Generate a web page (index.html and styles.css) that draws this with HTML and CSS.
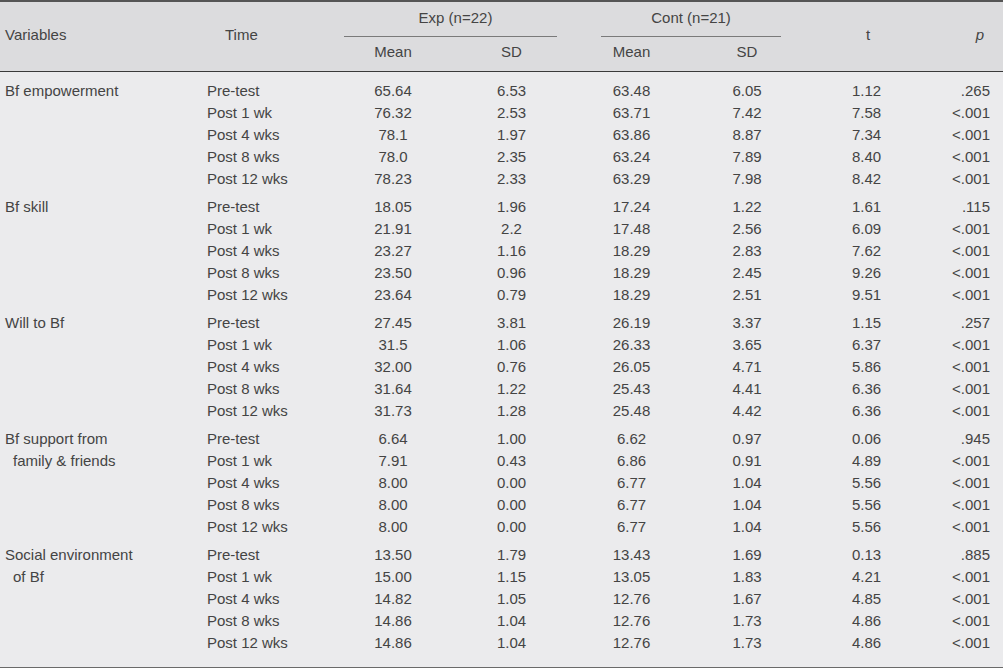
FILE: index.html
```html
<!DOCTYPE html>
<html>
<head>
<meta charset="utf-8">
<link rel="stylesheet" href="styles.css">
</head>
<body>
<table class="tbl">
  <colgroup>
    <col class="c-var"><col class="c-time"><col class="c-em"><col class="c-es"><col class="c-gap"><col class="c-cm"><col class="c-cs"><col class="c-t"><col class="c-p">
  </colgroup>
  <thead>
    <tr class="h1">
      <th rowspan="2" class="h-var">Variables</th>
      <th rowspan="2" class="h-time">Time</th>
      <th colspan="2" class="h-grp h-exp">Exp (n=22)</th>
      <th rowspan="2" class="h-gap"></th>
      <th colspan="2" class="h-grp">Cont (n=21)</th>
      <th rowspan="2" class="h-t">t</th>
      <th rowspan="2" class="h-p"><i>p</i></th>
    </tr>
    <tr class="h2">
      <th class="em">Mean</th>
      <th class="es">SD</th>
      <th class="cm">Mean</th>
      <th class="cs">SD</th>
    </tr>
  </thead>
  <tbody>
    <tr class="grp first"><td class="var">Bf empowerment</td><td class="time">Pre-test</td><td class="em">65.64</td><td class="es">6.53</td><td></td><td class="cm">63.48</td><td class="cs">6.05</td><td class="t">1.12</td><td class="p">.265</td></tr>
    <tr><td class="var"></td><td class="time">Post 1 wk</td><td class="em">76.32</td><td class="es">2.53</td><td></td><td class="cm">63.71</td><td class="cs">7.42</td><td class="t">7.58</td><td class="p">&lt;.001</td></tr>
    <tr><td class="var"></td><td class="time">Post 4 wks</td><td class="em">78.1</td><td class="es">1.97</td><td></td><td class="cm">63.86</td><td class="cs">8.87</td><td class="t">7.34</td><td class="p">&lt;.001</td></tr>
    <tr><td class="var"></td><td class="time">Post 8 wks</td><td class="em">78.0</td><td class="es">2.35</td><td></td><td class="cm">63.24</td><td class="cs">7.89</td><td class="t">8.40</td><td class="p">&lt;.001</td></tr>
    <tr><td class="var"></td><td class="time">Post 12 wks</td><td class="em">78.23</td><td class="es">2.33</td><td></td><td class="cm">63.29</td><td class="cs">7.98</td><td class="t">8.42</td><td class="p">&lt;.001</td></tr>

    <tr class="grp"><td class="var">Bf skill</td><td class="time">Pre-test</td><td class="em">18.05</td><td class="es">1.96</td><td></td><td class="cm">17.24</td><td class="cs">1.22</td><td class="t">1.61</td><td class="p">.115</td></tr>
    <tr><td class="var"></td><td class="time">Post 1 wk</td><td class="em">21.91</td><td class="es">2.2</td><td></td><td class="cm">17.48</td><td class="cs">2.56</td><td class="t">6.09</td><td class="p">&lt;.001</td></tr>
    <tr><td class="var"></td><td class="time">Post 4 wks</td><td class="em">23.27</td><td class="es">1.16</td><td></td><td class="cm">18.29</td><td class="cs">2.83</td><td class="t">7.62</td><td class="p">&lt;.001</td></tr>
    <tr><td class="var"></td><td class="time">Post 8 wks</td><td class="em">23.50</td><td class="es">0.96</td><td></td><td class="cm">18.29</td><td class="cs">2.45</td><td class="t">9.26</td><td class="p">&lt;.001</td></tr>
    <tr><td class="var"></td><td class="time">Post 12 wks</td><td class="em">23.64</td><td class="es">0.79</td><td></td><td class="cm">18.29</td><td class="cs">2.51</td><td class="t">9.51</td><td class="p">&lt;.001</td></tr>

    <tr class="grp"><td class="var">Will to Bf</td><td class="time">Pre-test</td><td class="em">27.45</td><td class="es">3.81</td><td></td><td class="cm">26.19</td><td class="cs">3.37</td><td class="t">1.15</td><td class="p">.257</td></tr>
    <tr><td class="var"></td><td class="time">Post 1 wk</td><td class="em">31.5</td><td class="es">1.06</td><td></td><td class="cm">26.33</td><td class="cs">3.65</td><td class="t">6.37</td><td class="p">&lt;.001</td></tr>
    <tr><td class="var"></td><td class="time">Post 4 wks</td><td class="em">32.00</td><td class="es">0.76</td><td></td><td class="cm">26.05</td><td class="cs">4.71</td><td class="t">5.86</td><td class="p">&lt;.001</td></tr>
    <tr><td class="var"></td><td class="time">Post 8 wks</td><td class="em">31.64</td><td class="es">1.22</td><td></td><td class="cm">25.43</td><td class="cs">4.41</td><td class="t">6.36</td><td class="p">&lt;.001</td></tr>
    <tr><td class="var"></td><td class="time">Post 12 wks</td><td class="em">31.73</td><td class="es">1.28</td><td></td><td class="cm">25.48</td><td class="cs">4.42</td><td class="t">6.36</td><td class="p">&lt;.001</td></tr>

    <tr class="grp"><td class="var">Bf support from</td><td class="time">Pre-test</td><td class="em">6.64</td><td class="es">1.00</td><td></td><td class="cm">6.62</td><td class="cs">0.97</td><td class="t">0.06</td><td class="p">.945</td></tr>
    <tr><td class="var cont">family &amp; friends</td><td class="time">Post 1 wk</td><td class="em">7.91</td><td class="es">0.43</td><td></td><td class="cm">6.86</td><td class="cs">0.91</td><td class="t">4.89</td><td class="p">&lt;.001</td></tr>
    <tr><td class="var"></td><td class="time">Post 4 wks</td><td class="em">8.00</td><td class="es">0.00</td><td></td><td class="cm">6.77</td><td class="cs">1.04</td><td class="t">5.56</td><td class="p">&lt;.001</td></tr>
    <tr><td class="var"></td><td class="time">Post 8 wks</td><td class="em">8.00</td><td class="es">0.00</td><td></td><td class="cm">6.77</td><td class="cs">1.04</td><td class="t">5.56</td><td class="p">&lt;.001</td></tr>
    <tr><td class="var"></td><td class="time">Post 12 wks</td><td class="em">8.00</td><td class="es">0.00</td><td></td><td class="cm">6.77</td><td class="cs">1.04</td><td class="t">5.56</td><td class="p">&lt;.001</td></tr>

    <tr class="grp"><td class="var">Social environment</td><td class="time">Pre-test</td><td class="em">13.50</td><td class="es">1.79</td><td></td><td class="cm">13.43</td><td class="cs">1.69</td><td class="t">0.13</td><td class="p">.885</td></tr>
    <tr><td class="var cont">of Bf</td><td class="time">Post 1 wk</td><td class="em">15.00</td><td class="es">1.15</td><td></td><td class="cm">13.05</td><td class="cs">1.83</td><td class="t">4.21</td><td class="p">&lt;.001</td></tr>
    <tr><td class="var"></td><td class="time">Post 4 wks</td><td class="em">14.82</td><td class="es">1.05</td><td></td><td class="cm">12.76</td><td class="cs">1.67</td><td class="t">4.85</td><td class="p">&lt;.001</td></tr>
    <tr><td class="var"></td><td class="time">Post 8 wks</td><td class="em">14.86</td><td class="es">1.04</td><td></td><td class="cm">12.76</td><td class="cs">1.73</td><td class="t">4.86</td><td class="p">&lt;.001</td></tr>
    <tr class="last"><td class="var"></td><td class="time">Post 12 wks</td><td class="em">14.86</td><td class="es">1.04</td><td></td><td class="cm">12.76</td><td class="cs">1.73</td><td class="t">4.86</td><td class="p">&lt;.001</td></tr>
  </tbody>
</table>
</body>
</html>
```

FILE: styles.css
```css
html, body {
  margin: 0;
  padding: 0;
  background: #ebebed;
}

.tbl {
  width: 1003px;
  table-layout: fixed;
  border-collapse: separate;
  border-spacing: 0;
  font-family: "Liberation Sans", Arial, sans-serif;
  font-size: 15px;
  color: #444;
  border-top: 2px solid #555;
  border-bottom: 2px solid #6a6a6a;
  background: #ebebed;
}

.c-var { width: 200px; }
.c-time { width: 144px; }
.c-em { width: 98px; }
.c-es { width: 115px; }
.c-gap { width: 44px; }
.c-cm { width: 90px; }
.c-cs { width: 90px; }
.c-t { width: 159px; }
.c-p { width: 63px; }

thead th {
  background: #dcdcde;
  font-weight: normal;
  padding: 0;
  white-space: nowrap;
  box-sizing: border-box;
  line-height: 18px;
  vertical-align: middle;
}

.h1 th {
  height: 35px;
  padding-bottom: 2px;
}

.h1 th[rowspan] {
  border-bottom: 1px solid #3a3a3a;
  padding-bottom: 4px;
}

.h-grp {
  text-align: center;
  border-bottom: 1px solid #7a7a7a;
}

.h-exp { padding-left: 10px !important; }

.h-var { text-align: left; padding-left: 5px !important; }
.h-time { text-align: left; padding-left: 25px !important; }
.h-t { text-align: left; padding-left: 85px !important; }
.h-p { text-align: right; padding-right: 19px !important; }

.h2 th {
  height: 35px;
  border-bottom: 1px solid #3a3a3a;
  padding-bottom: 4px;
  text-align: center;
}

tbody td {
  height: 22px;
  line-height: 22px;
  padding: 0;
  white-space: nowrap;
  vertical-align: bottom;
}

tbody tr.grp td { padding-top: 6px; }
tbody tr.grp.first td { padding-top: 8px; }
tbody tr.last td { padding-bottom: 13px; }

.var { padding-left: 5px !important; text-align: left; }
.var.cont { padding-left: 13px !important; }
.time { padding-left: 7px !important; text-align: left; }

.em { text-align: center; }
.es { text-align: center; padding-left: 24px !important; }
.cm { text-align: center; padding-right: 29px !important; }
.cs { text-align: center; padding-left: 22px !important; }
.t { text-align: center; padding-left: 12px !important; }
.p { text-align: right; padding-right: 13px !important; }
```
